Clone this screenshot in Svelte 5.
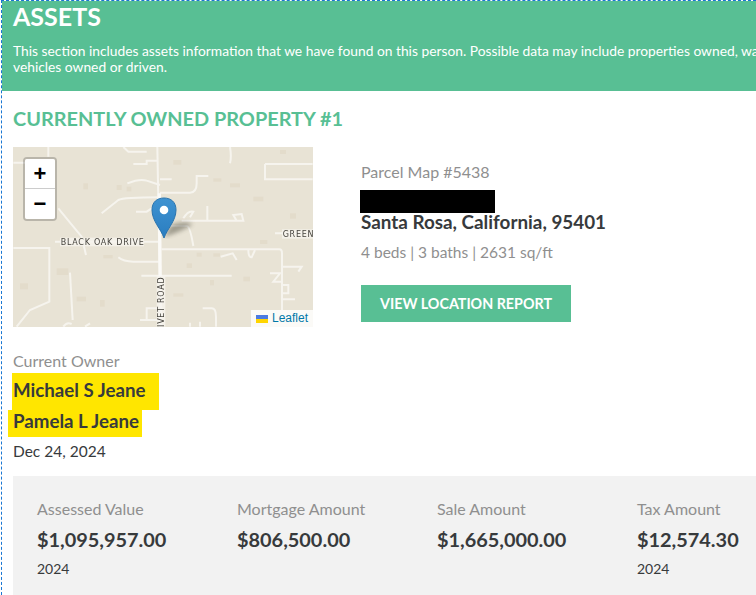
<script>
  const stats = [
    { label: 'Assessed Value', value: '$1,095,957.00', year: '2024' },
    { label: 'Mortgage Amount', value: '$806,500.00', year: '' },
    { label: 'Sale Amount', value: '$1,665,000.00', year: '' },
    { label: 'Tax Amount', value: '$12,574.30', year: '2024' }
  ];
  const roads = [
    'M472 21 L482 560',
    'M485 328 H838 Q846 328 846 340 V510',
    'M424 407 H695',
    'M40 324 H148 V485 L90 510 L50 560',
    'M175 205 Q220 260 245 290 L258 345',
    'M165 305 H480',
    'M305 220 L355 180 Q370 172 480 172',
    'M480 158 H570 Q590 158 590 130 V108 H625',
    'M382 130 Q420 115 440 122 L480 135 M480 118 H515',
    'M400 72 H440 V62 H472',
    'M40 68 H100 M145 21 V50',
    'M795 72 H938 M795 72 V118 H938',
    'M545 242 H730 L725 222 L700 225 L710 242 M622 198 V242 M550 235 Q565 210 580 215 L570 232',
    'M408 215 H440 L455 205',
    'M500 258 H560 Q570 258 580 318',
    'M355 352 Q370 365 400 365 H480',
    'M662 350 L698 340 L710 360 M745 330 Q745 352 755 352 L765 330',
    'M825 280 H938',
    'M846 380 H905 L895 395 M810 400 H840 L820 425 H846 M846 435 H865 V460 H846 M846 478 H885',
    'M210 398 L218 540',
    'M440 540 V505 H490 M420 540 H480',
    'M608 505 H635 Q648 505 648 530 V560',
    'M190 560 Q200 545 215 552 M255 560 L270 550',
    'M690 21 Q695 50 690 70',
    'M370 21 L385 35 H440',
    'M570 560 V548 M600 560 V545'
  ];
  const blocks = [
    [350,135,15,15],[380,140,14,14],[170,385,35,20],[590,338,15,12],[640,340,20,10],[730,410,20,14],[630,420,12,16],
    [60,430,24,18],[310,345,28,10],[690,130,30,12],[640,115,24,10],[120,60,30,14],[840,30,18,12],[520,60,24,14],[760,170,30,14],[250,130,14,18],[560,370,16,14],[230,470,28,14],[300,480,14,20],[780,300,22,12],[520,460,30,10],[870,220,18,16],[100,200,18,14]
  ];
</script>

<div class="page">
  <header class="banner">
    <h1>ASSETS</h1>
    <p>This section includes assets information that we have found on this person. Possible data may include properties owned, watercraft owned, and<br />vehicles owned or driven.</p>
  </header>

  <section class="content">
    <h2>CURRENTLY OWNED PROPERTY #1</h2>

    <div class="property">
      <div class="map">
        <svg class="tiles" viewBox="39 21 900 540" width="300" height="180" aria-hidden="true">
          <rect x="39" y="21" width="900" height="540" fill="#e8e3d5" />
          {#each blocks as b}
            <rect x={b[0]} y={b[1]} width={b[2]} height={b[3]} fill="#e3dccb" />
          {/each}
          {#each roads as d}
            <path {d} fill="none" stroke="#f6f4ee" stroke-width="6" />
          {/each}
          <path d="M478 160 L482 560" fill="none" stroke="#fbfaf7" stroke-width="10" />
          <rect x="180" y="293" width="252" height="26" fill="#f6f4ee" opacity=".8" />
          <text x="182" y="314" class="label">BLACK OAK DRIVE</text>
          <rect x="846" y="268" width="93" height="28" fill="#f6f4ee" opacity=".8" />
          <text x="848" y="291" class="label">GREEN</text>
          <rect x="470" y="408" width="26" height="152" fill="#f6f4ee" opacity=".8" />
          <text transform="translate(492 410) rotate(-90)" class="label" text-anchor="end">OLIVET ROAD</text>
        </svg>

        <div class="zoom">
          <button type="button">+</button>
          <button type="button">−</button>
        </div>

        <svg class="marker" viewBox="0 0 60 42" width="60" height="42" aria-hidden="true">
          <defs>
            <linearGradient id="pin" x1="0" y1="0" x2="0" y2="1">
              <stop offset="0" stop-color="#3f93d1" />
              <stop offset="1" stop-color="#2a7dc0" />
            </linearGradient>
            <filter id="soft" x="-40%" y="-40%" width="180%" height="180%">
              <feGaussianBlur stdDeviation="2" />
            </filter>
          </defs>
          <path d="M13 40 L20 28 Q32 23 42 27 Q30 35 13 40Z" fill="#4a4638" opacity=".45" filter="url(#soft)" />
          <path d="M13 41 C10 32 1 24 1 13 C1 5 6 1 13 1 C20 1 25 5 25 13 C25 24 16 32 13 41Z" fill="url(#pin)" stroke="#2a74ae" stroke-width="1" />
          <circle cx="13" cy="13" r="4.3" fill="#fff" />
        </svg>

        <div class="attribution">
          <svg viewBox="0 0 12 8" width="12" height="8" aria-hidden="true">
            <rect width="12" height="4" fill="#4c7be1" />
            <rect y="4" width="12" height="4" fill="#ffd500" />
          </svg>
          <span>Leaflet</span>
        </div>
      </div>

      <div class="details">
        <div class="muted">Parcel Map #5438</div>
        <div class="redact"></div>
        <div class="address">Santa Rosa, California, 95401</div>
        <div class="muted specs">4 beds | 3 baths | 2631 sq/ft</div>
        <button class="report" type="button">VIEW LOCATION REPORT</button>
      </div>
    </div>

    <div class="owner">
      <div class="muted">Current Owner</div>
      <div class="name first"><span>Michael S Jeane</span></div>
      <div class="name second"><span>Pamela L Jeane</span></div>
      <div class="date">Dec 24, 2024</div>
    </div>

    <div class="stats">
      {#each stats as s}
        <div class="stat">
          <div class="muted">{s.label}</div>
          <div class="value">{s.value}</div>
          {#if s.year}<div class="year">{s.year}</div>{/if}
        </div>
      {/each}
    </div>
  </section>
</div>

<style>
  :global(body) {
    margin: 0;
    background: #fff;
  }
  .page {
    width: 754px;
    height: 594px;
    overflow: hidden;
    border-top: 1px dashed #1976d2;
    border-left: 1px dashed #1976d2;
    margin-left: 1px;
    font-family: Lato, "Open Sans", sans-serif;
    color: #373a3c;
  }
  .banner {
    background: #58bf94;
    color: #fff;
    height: 90px;
    padding: 0 0 0 11px;
    box-sizing: border-box;
    width: 754px;
    overflow: hidden;
  }
  h1 {
    margin: -2px 0 0;
    font-size: 25px;
    line-height: 34px;
    font-weight: 700;
  }
  .banner p {
    margin: 10px 0 0;
    width: 900px;
    font-size: 13.8px;
    line-height: 16px;
  }
  .content {
    padding: 0 0 0 11px;
  }
  h2 {
    margin: 15px 0 0;
    font-size: 19.9px;
    line-height: 24px;
    font-weight: 700;
    color: #58bf94;
  }
  .property {
    display: flex;
    margin-top: 17px;
  }
  .map {
    position: relative;
    width: 300px;
    height: 180px;
    flex: none;
    overflow: hidden;
  }
  .tiles {
    display: block;
    filter: blur(0.4px);
  }
  .label {
    font-family: "DejaVu Sans", sans-serif;
    font-size: 24px;
    letter-spacing: 2.2px;
    fill: #45433d;
  }
  .zoom {
    position: absolute;
    left: 10px;
    top: 10px;
    border: 2px solid rgba(0, 0, 0, .2);
    border-radius: 4px;
    background-clip: padding-box;
    box-sizing: content-box;
    width: 30px;
  }
  .zoom button {
    display: block;
    width: 30px;
    height: 30px;
    padding: 0;
    border: 0;
    background: #fff;
    font: 700 22px/30px "Liberation Sans", sans-serif;
    color: #000;
    text-align: center;
  }
  .zoom button:first-child {
    border-bottom: 1px solid #ccc;
    border-radius: 2px 2px 0 0;
  }
  .zoom button:last-child {
    border-radius: 0 0 2px 2px;
  }
  .marker {
    position: absolute;
    left: 138px;
    top: 50px;
  }
  .attribution {
    position: absolute;
    right: 0;
    bottom: 0;
    height: 17px;
    display: flex;
    align-items: center;
    gap: 4px;
    padding: 0 5px;
    background: rgba(255, 255, 255, .8);
    font: 12px/17px "Liberation Sans", sans-serif;
    color: #0078a8;
  }
  .details {
    margin-left: 48px;
    padding-top: 15px;
  }
  .muted {
    color: #8f8f8f;
    font-size: 16px;
    line-height: 20px;
  }
  .redact {
    width: 135px;
    height: 23px;
    margin: 8px 0 0 -1px;
    background: #000;
  }
  .address {
    margin: -1px 0 1px;
    font-size: 18.85px;
    line-height: 19px;
    font-weight: 700;
  }
  .specs {
    margin-top: 11px;
    font-size: 15.5px;
  }
  .report {
    display: block;
    width: 210px;
    height: 37px;
    margin-top: 23px;
    padding: 0 0 1px;
    border: 0;
    background: #58bf94;
    color: #fff;
    font-family: inherit;
    font-size: 14.3px;
    font-weight: 700;
    text-align: center;
  }
  .owner {
    margin-top: 24px;
  }
  .name {
    font-size: 18.7px;
    font-weight: 700;
  }
  .name span {
    display: block;
    width: fit-content;
    background: #ffe600;
  }
  .first {
    margin-top: 2px;
    height: 37px;
  }
  .first span {
    margin-left: -1px;
    padding: 4px 14px 6px 1px;
    line-height: 27px;
  }
  .second {
    height: 27px;
  }
  .second span {
    margin-left: -5px;
    padding: 0 3px 4px 5px;
    line-height: 23px;
  }
  .date {
    margin-top: 4px;
    font-size: 15.5px;
    line-height: 20px;
  }
  .stats {
    display: flex;
    margin-top: 15px;
    height: 130px;
    width: 800px;
    padding: 23px 0 0 24px;
    box-sizing: border-box;
    background: #f2f2f2;
  }
  .stat {
    width: 200px;
    flex: none;
  }
  .value {
    margin-top: 7px;
    font-size: 19.9px;
    line-height: 26px;
    font-weight: 700;
  }
  .year {
    margin-top: 7px;
    font-size: 14px;
    line-height: 20px;
  }
</style>
